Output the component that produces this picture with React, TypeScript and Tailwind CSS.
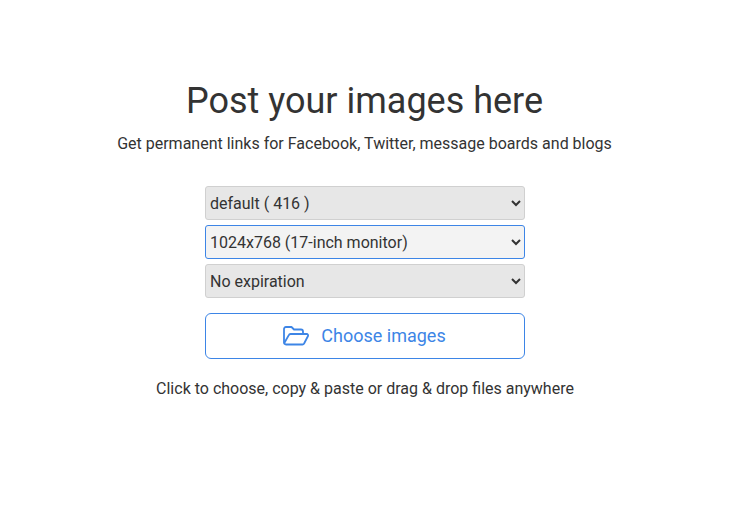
const selectClass =
  'block w-full h-[34px] rounded-[3px] border border-[#d0d0d0] bg-[#e7e7e7] text-[16px] text-[#333] outline-none';

function FolderOpenIcon() {
  return (
    <svg
      width="26"
      height="20"
      viewBox="0 0 26 20"
      fill="none"
      stroke="currentColor"
      strokeWidth="1.8"
      strokeLinejoin="round"
    >
      <path d="M3 18.5c-1.2 0-2-.8-2-2V3c0-1.2.8-2 2-2h5.5l2.5 2.5h7c1.2 0 2 .8 2 2V8" />
      <path d="M3 18.5h16.5c.7 0 1.2-.3 1.6-1L25 10c.3-.9-.2-2-1.3-2H7.5c-.8 0-1.4.4-1.7 1.1L1.3 17" />
    </svg>
  );
}

export default function App() {
  return (
    <div className="min-h-[521px] w-[730px] bg-white font-['Roboto',sans-serif] text-[#333]">
      <div className="flex flex-col items-center pt-[79px]">
        <h1 className="pr-[1px] text-[36px] leading-[44px] font-normal">Post your images here</h1>
        <p className="mt-[10px] pr-[1px] text-[16px] leading-[22px]">
          Get permanent links for Facebook, Twitter, message boards and blogs
        </p>

        <form className="mt-[31px] flex w-[320px] flex-col">
          <div className="flex flex-col gap-[5px]">
            <select className={selectClass} defaultValue="default">
              <option value="default">default ( 416 )</option>
            </select>
            <select
              className="block h-[34px] w-full rounded-[3px] border border-[#3d85e6] bg-[#f3f3f3] text-[16px] text-[#333] outline-none"
              defaultValue="1024"
            >
              <option value="1024">1024x768 (17-inch monitor)</option>
            </select>
            <select className={selectClass} defaultValue="never">
              <option value="never">No expiration</option>
            </select>
          </div>

          <button
            type="button"
            className="mt-[15px] flex h-[46px] w-full items-center justify-center gap-[12px] rounded-[6px] border border-[#3d85e6] bg-white pr-[1px] pb-[1px] text-[18px] text-[#3d85e6]"
          >
            <FolderOpenIcon />
            Choose images
          </button>
        </form>

        <p className="mt-[19px] text-[16px] leading-[22px]">
          Click to choose, copy &amp; paste or drag &amp; drop files anywhere
        </p>
      </div>
    </div>
  );
}
